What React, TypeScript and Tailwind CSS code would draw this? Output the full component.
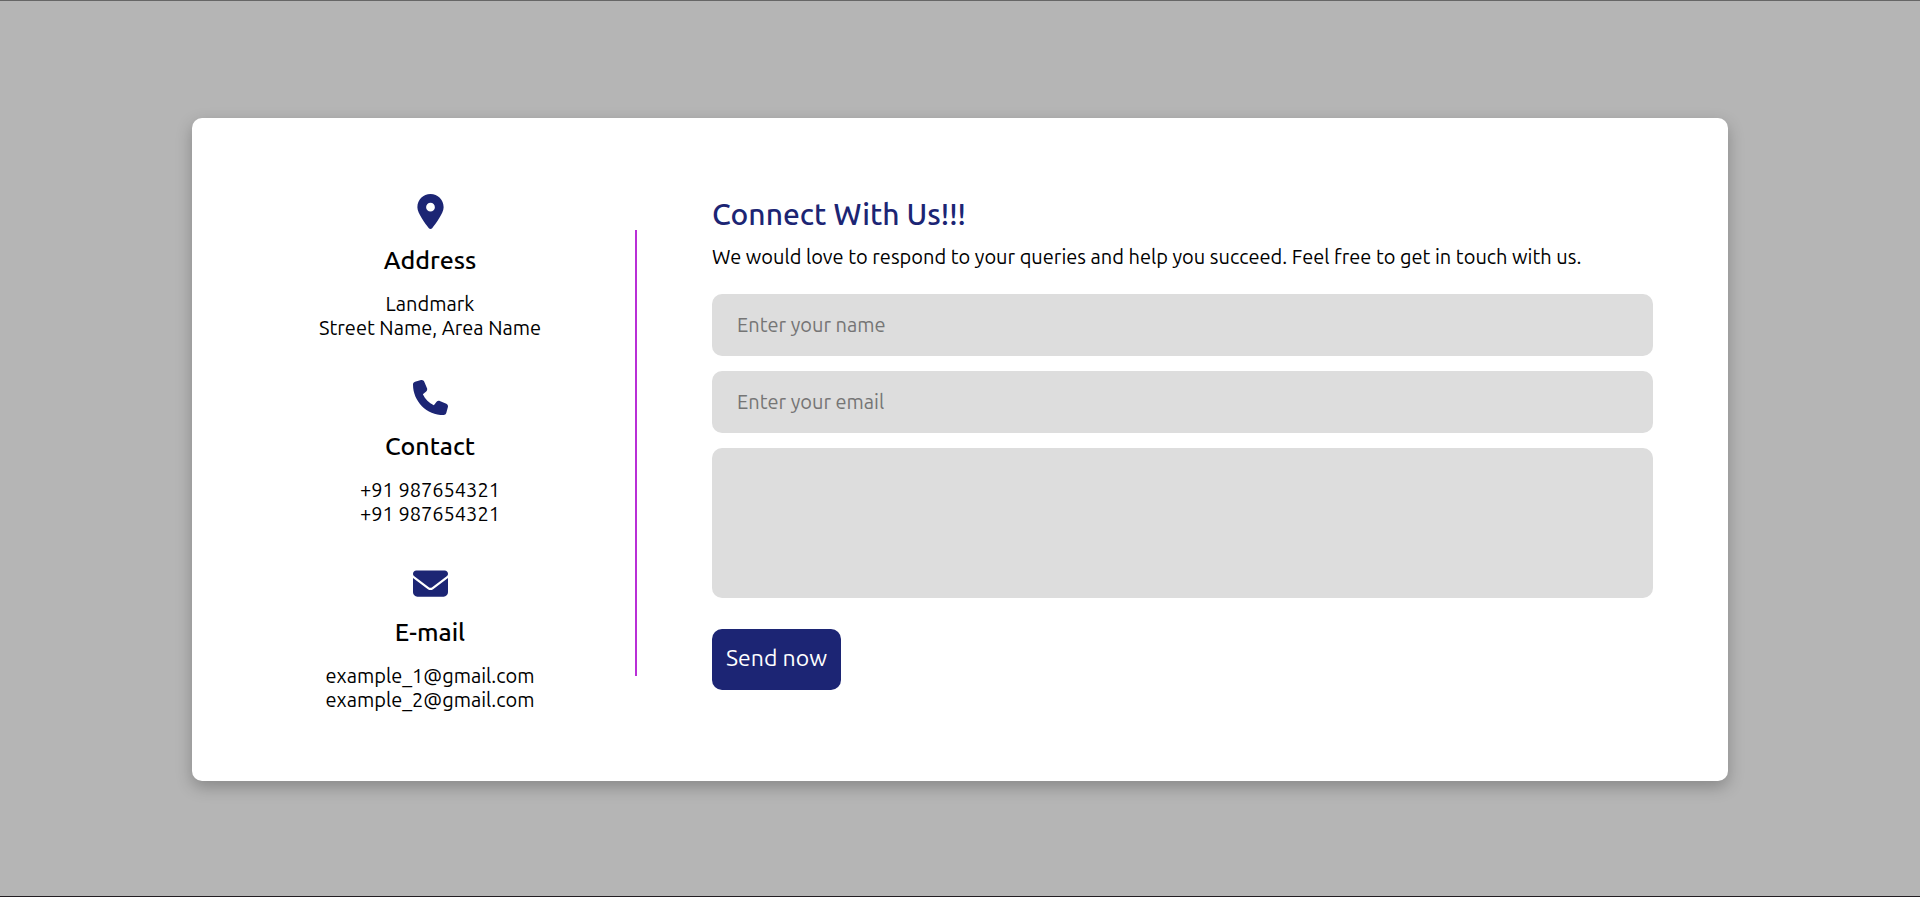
import type { ReactNode } from "react";
import { FaEnvelope, FaLocationDot, FaPhone } from "react-icons/fa6";

type DetailProps = { icon: ReactNode; title: string; lines: string[] };

function Detail({ icon, title, lines }: DetailProps) {
  return (
    <div className="flex flex-col items-center text-center">
      <span className="text-[35px] text-[#1c2574]">{icon}</span>
      <h2 className="mt-[15px] text-[25px] leading-8 font-medium">{title}</h2>
      <div className="mt-4 text-xl leading-6">
        {lines.map((line, i) => (
          <p key={i}>{line}</p>
        ))}
      </div>
    </div>
  );
}

const field =
  "block w-full rounded-[10px] bg-[#ddd] px-[25px] text-xl outline-none placeholder:text-[#757575]";

export default function App() {
  return (
    <main className="flex min-h-screen items-center justify-center border-t border-b border-t-[#666] border-b-[#221d22] bg-[#b5b5b5] pt-0.5 font-['Ubuntu','Noto_Sans',sans-serif] text-black">
      <section className="flex w-4/5 rounded-[10px] bg-white pt-[76px] pr-[75px] pb-[69px] pl-8 shadow-[0_6px_16px_rgba(0,0,0,0.25)]">
        <div className="flex w-[412px] flex-col gap-10">
          <Detail icon={<FaLocationDot />} title="Address" lines={["Landmark", "Street Name, Area Name"]} />
          <Detail icon={<FaPhone />} title="Contact" lines={["+91 987654321", "+91 987654321"]} />
          <Detail icon={<FaEnvelope />} title="E-mail" lines={["example_1@gmail.com", "example_2@gmail.com"]} />
        </div>
        <div className="my-9 -ml-px w-0.5 bg-[#b92fd6]" />
        <div className="ml-[75px] flex-1">
          <h1 className="text-[30px] leading-10 font-medium text-[#1c2574]">Connect With Us!!!</h1>
          <p className="mt-[11px] text-xl leading-6">
            We would love to respond to your queries and help you succeed. Feel free to get in touch with us.
          </p>
          <form className="mt-[25px] flex flex-col items-start gap-[15px]" onSubmit={(e) => e.preventDefault()}>
            <input type="text" aria-label="Name" placeholder="Enter your name" className={`${field} h-[62px] pb-0.5`} />
            <input type="email" aria-label="Email" placeholder="Enter your email" className={`${field} h-[62px] pb-0.5`} />
            <textarea aria-label="Message" className={`${field} h-[150px] resize-none py-4`} />
            <button type="submit" className="mt-4 h-[61px] rounded-[10px] bg-[#1c2574] px-3.5 pb-0.5 text-[23px] text-white">
              Send now
            </button>
          </form>
        </div>
      </section>
    </main>
  );
}
